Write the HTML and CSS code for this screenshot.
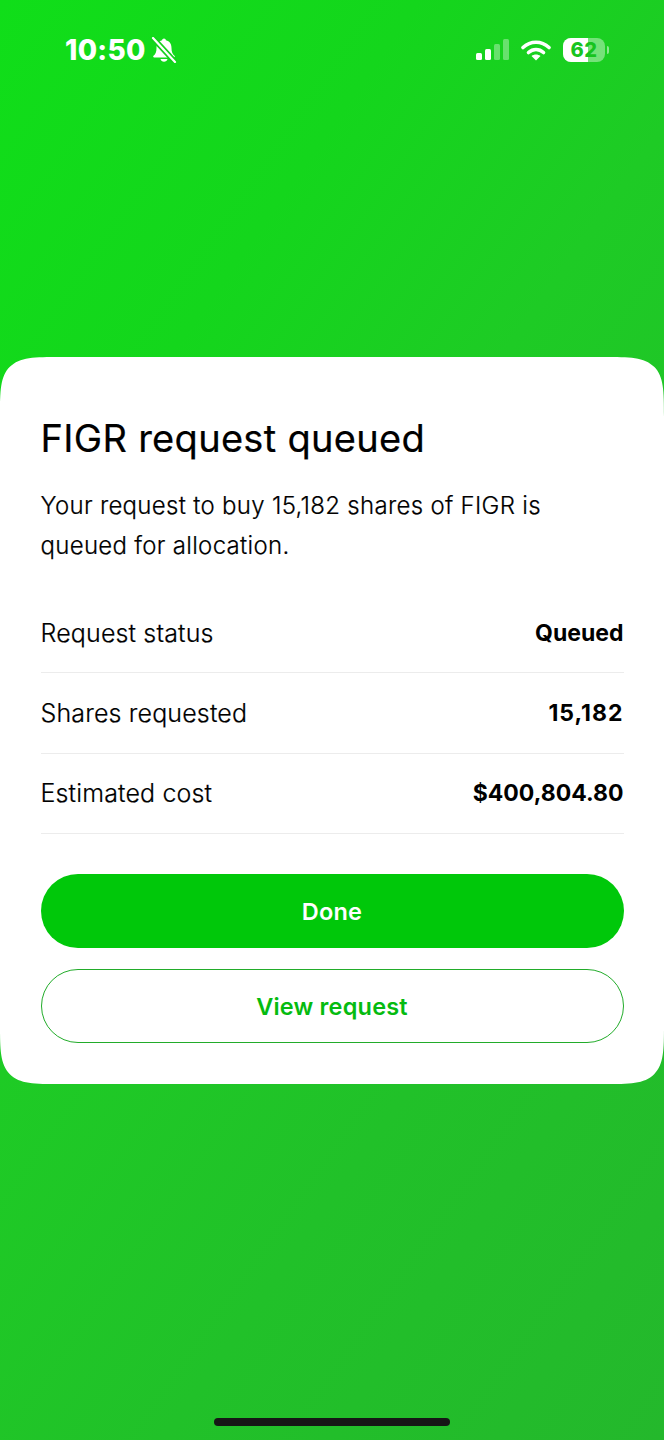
FILE: index.html
```html
<!DOCTYPE html>
<html lang="en">
<head>
    <meta charset="UTF-8">
    <meta name="viewport" content="width=device-width, initial-scale=1.0">
    <title>FIGR request queued</title>
    <link rel="stylesheet" href="styles.css">
</head>
<body>
    <div class="screen">
        <div class="statusBar">
            <div class="statusLeft">
                <span class="clock">10:50</span>
                <svg class="bell" width="26" height="26" viewBox="0 0 26 26">
                    <path d="M13 1.500c-1 0-1.800.8-1.900 1.800C7.300 4.200 5.500 7.200 5.500 11c0 4-1 6-3 7.800-.7.700-.3 1.700.7 1.700h19.600c1 0 1.400-1 .7-1.700-2-1.800-3-3.800-3-7.800 0-3.800-1.800-6.800-5.600-7.700-.1-1-.9-1.800-1.900-1.800z" fill="#fff"/>
                    <path d="M9.500 22h7c-.4 1.700-1.800 2.700-3.500 2.700s-3.100-1-3.500-2.700z" fill="#fff"/>
                    <path d="M2 1l22 24" stroke="#15d01d" stroke-width="5.500"/>
                    <path d="M2 1l22 24" stroke="#fff" stroke-width="2.200" stroke-linecap="round"/>
                </svg>
            </div>
            <div class="statusRight">
                <svg class="signal" width="33" height="22" viewBox="0 0 33 22">
                    <rect x="0" y="14" width="6" height="7" rx="1.500" fill="#fff"/>
                    <rect x="9" y="10" width="6" height="11" rx="1.500" fill="#fff"/>
                    <rect x="18" y="5" width="6" height="16" rx="1.500" fill="#fff" fill-opacity=".35"/>
                    <rect x="27" y="0" width="6" height="21" rx="1.500" fill="#fff" fill-opacity=".35"/>
                </svg>
                <svg class="wifi" width="30" height="22" viewBox="0 0 30 22">
                    <path d="M2 8.500C9.500 1.500 20.500 1.500 28 8.500" fill="none" stroke="#fff" stroke-width="3.600" stroke-linecap="round"/>
                    <path d="M7.500 13.500c4.500-4 10.500-4 15 0" fill="none" stroke="#fff" stroke-width="3.600" stroke-linecap="round"/>
                    <path d="M15 21.500l-4.500-4.600c2.700-2 6.300-2 9 0z" fill="#fff"/>
                </svg>
                <div class="battery">
                    <div class="batteryBody">
                        <div class="batteryFill" style="width: 60%"></div>
                        <span class="batteryText">62</span>
                    </div>
                    <div class="batteryCap"></div>
                </div>
            </div>
        </div>

        <div class="card">
            <h1>FIGR request queued</h1>
            <p class="message">Your request to buy 15,182 shares of FIGR is queued for allocation.</p>
            <div class="details">
                <div class="row">
                    <span>Request status</span>
                    <strong>Queued</strong>
                </div>
                <div class="row">
                    <span>Shares requested</span>
                    <strong class="shares">15,182</strong>
                </div>
                <div class="row">
                    <span>Estimated cost</span>
                    <strong>$400,804.80</strong>
                </div>
            </div>
            <div class="buttons">
                <button class="primary" type="button">Done</button>
                <button class="secondary" type="button">View request</button>
            </div>
        </div>

        <div class="homeBar"></div>
    </div>
</body>
</html>
```

FILE: styles.css
```css
* {
    box-sizing: border-box;
}

body {
    margin: 0;
    font-family: 'Inter', 'Liberation Sans', sans-serif;
    color: #000;
}

.screen {
    width: 664px;
    height: 1440px;
    display: flex;
    flex-direction: column;
    position: relative;
    background: linear-gradient(125deg, #10de19 0%, #14d61c 25%, #1ecb25 45%, #21c129 70%, #24b82c 100%);
}

.statusBar {
    height: 357px;
    padding: 30px 55px 0 65px;
    display: flex;
    justify-content: space-between;
    align-items: flex-start;
    color: white;
}

.statusLeft {
    display: flex;
    align-items: center;
    gap: 5px;
    height: 40px;
}

.clock {
    font-size: 28px;
    font-weight: 800;
    letter-spacing: 0.3px;
}

.statusRight {
    display: flex;
    align-items: center;
    height: 40px;
    gap: 12px;
}

.battery {
    display: flex;
    align-items: center;
    gap: 2px;
}

.batteryBody {
    width: 42px;
    height: 24px;
    border-radius: 8px;
    background: rgba(255, 255, 255, 0.4);
    position: relative;
    overflow: hidden;
    display: flex;
    align-items: center;
    justify-content: center;
}

.batteryFill {
    position: absolute;
    left: 0;
    top: 0;
    bottom: 0;
    background: white;
}

.batteryText {
    position: relative;
    font-size: 20px;
    font-weight: 800;
    letter-spacing: 0.5px;
    color: #17c41f;
}

.batteryCap {
    width: 2px;
    height: 8px;
    border-radius: 0 2px 2px 0;
    background: rgba(255, 255, 255, 0.5);
}

.card {
    height: 727px;
    background: white;
    border-radius: 62px;
    corner-shape: squircle;
    padding: 55px 40.5px 41px;
}

h1 {
    margin: 0;
    font-size: 38px;
    line-height: 52px;
    font-weight: 400;
    letter-spacing: 0.3px;
    -webkit-text-stroke: 0.2px #000;
}

.message {
    margin: 22px 0 0;
    font-size: 24px;
    line-height: 40px;
    font-weight: 300;
    letter-spacing: 0.3px;
    -webkit-text-stroke: 0.2px #000;
}

.details {
    margin-top: 27px;
}

.row {
    height: 80.33px;
    display: flex;
    justify-content: space-between;
    align-items: center;
    font-size: 25px;
    font-weight: 300;
    letter-spacing: 0.15px;
    border-bottom: 1px solid #ececec;
}

.row span {
    -webkit-text-stroke: 0.2px #000;
}

.row strong {
    font-size: 23px;
    font-weight: 700;
    letter-spacing: 0;
}

.row .shares {
    letter-spacing: 1px;
}

.buttons {
    margin-top: 40.5px;
    display: flex;
    flex-direction: column;
    gap: 21px;
}

button {
    height: 74px;
    border-radius: 37px;
    font-family: inherit;
    font-size: 23.5px;
    font-weight: 600;
    letter-spacing: 0.2px;
}

.primary {
    background: #00c80a;
    color: white;
    border: none;
}

.secondary {
    background: white;
    color: #05bb10;
    border: 1px solid #22ac2a;
}

.homeBar {
    position: absolute;
    left: 214px;
    bottom: 14px;
    width: 236px;
    height: 8px;
    border-radius: 4px;
    background: #161616;
}
```
